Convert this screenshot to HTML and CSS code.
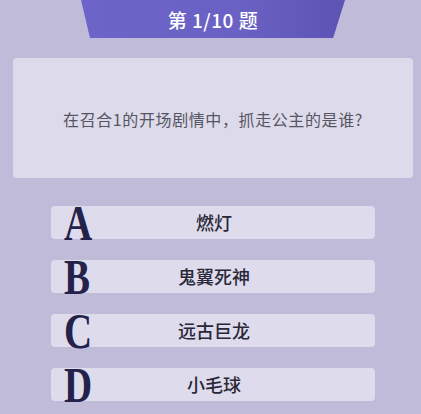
FILE: index.html
```html
<!DOCTYPE html>
<html lang="zh">
<head>
<meta charset="utf-8">
<link rel="stylesheet" href="styles.css">
</head>
<body>
<div class="page">
  <div class="header"><span class="header-text">第 1/10 题</span></div>
  <div class="card">在召合1的开场剧情中，抓走公主的是谁?</div>
  <div class="options">
    <div class="option"><span class="letter">A</span><span class="label">燃灯</span></div>
    <div class="option"><span class="letter">B</span><span class="label">鬼翼死神</span></div>
    <div class="option"><span class="letter">C</span><span class="label">远古巨龙</span></div>
    <div class="option"><span class="letter">D</span><span class="label">小毛球</span></div>
  </div>
</div>
</body>
</html>
```
FILE: styles.css
```css
html, body {
  margin: 0;
  padding: 0;
}
body {
  background: #bfbbd9;
  width: 421px;
  height: 414px;
  overflow: hidden;
  font-family: "Noto Sans CJK SC", "Noto Sans", sans-serif;
}
.page {
  display: flex;
  flex-direction: column;
}
.header {
  margin-left: 81px;
  width: 264px;
  height: 38px;
  background: linear-gradient(90deg, #6c64c8 0%, #6a61c4 60%, #5d53b3 100%);
  clip-path: polygon(0 0, 100% 0, 95.5% 100%, 3.4% 100%);
  display: flex;
  align-items: center;
  justify-content: center;
}
.header-text {
  color: #ffffff;
  font-size: 19px;
  font-weight: 500;
  letter-spacing: 0.5px;
  margin-top: 1px;
}
.card {
  margin: 20px 0 0 13px;
  width: 400px;
  height: 120px;
  background: #dddbeb;
  border-radius: 4px;
  display: flex;
  align-items: center;
  justify-content: center;
  font-size: 16px;
  letter-spacing: 0.6px;
  color: #555561;
  padding-top: 2px;
  box-sizing: border-box;
}
.options {
  margin: 28px 0 0 51px;
  display: flex;
  flex-direction: column;
  gap: 21.5px;
}
.option {
  position: relative;
  width: 324px;
  height: 32.5px;
  background: #dedcec;
  border-radius: 4px;
  display: flex;
  align-items: center;
  justify-content: center;
}
.label {
  font-size: 18px;
  font-weight: 500;
  color: #2a2838;
  margin-left: 2px;
}
.letter {
  position: absolute;
  left: 13px;
  top: -8px;
  font-family: "Liberation Serif", serif;
  font-weight: bold;
  font-size: 50px;
  line-height: 1;
  color: #24214a;
  transform: scaleX(0.78);
  transform-origin: left top;
}
```
